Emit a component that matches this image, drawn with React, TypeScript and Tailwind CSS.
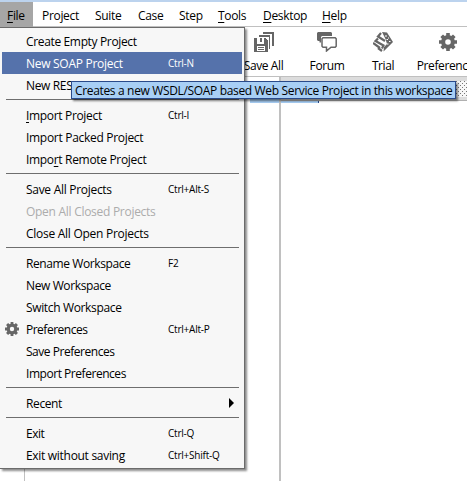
import React from "react";

type Row = { t: React.ReactNode; k?: string; sel?: boolean; off?: boolean; gear?: boolean; arrow?: boolean; tr: string };
const u = (s: string) => <span className="underline underline-offset-2">{s}</span>;

const groups: Row[][] = [
  [
    { t: "Create Empty Project", tr: "tracking-[-0.35px]" },
    { t: "New SOAP Project", k: "Ctrl-N", sel: true, tr: "tracking-[-0.28px]" },
    { t: "New REST Project", tr: "tracking-[-0.35px]" },
  ],
  [
    { t: <>{u("I")}mport Project</>, k: "Ctrl-I", tr: "tracking-[-0.33px]" },
    { t: "Import Packed Project", tr: "tracking-[-0.3px]" },
    { t: <>Impo{u("r")}t Remote Project</>, tr: "tracking-[-0.32px]" },
  ],
  [
    { t: "Save All Projects", k: "Ctrl+Alt-S", tr: "tracking-[-0.29px]" },
    { t: "Open All Closed Projects", off: true, tr: "tracking-[-0.28px]" },
    { t: "Close All Open Projects", tr: "tracking-[-0.27px]" },
  ],
  [
    { t: "Rename Workspace", k: "F2", tr: "tracking-[-0.41px]" },
    { t: "New Workspace", tr: "tracking-[-0.38px]" },
    { t: "Switch Workspace", tr: "tracking-[-0.35px]" },
    { t: "Preferences", k: "Ctrl+Alt-P", gear: true, tr: "tracking-[-0.5px]" },
    { t: "Save Preferences", tr: "tracking-[-0.47px]" },
    { t: "Import Preferences", tr: "tracking-[-0.46px]" },
  ],
  [{ t: "Recent", arrow: true, tr: "tracking-[-0.38px]" }],
  [
    { t: "Exit", k: "Ctrl-Q", tr: "tracking-[-0.5px]" },
    { t: "Exit without saving", k: "Ctrl+Shift-Q", tr: "tracking-[-0.3px]" },
  ],
];

function Gear({ className }: { className: string }) {
  return (
    <svg viewBox="0 0 18 18" className={className} fill="#666" fillRule="evenodd">
      <path d="M7.2 0h3.6v2.3l1.5.6L14 1.4 16.6 4l-1.5 1.7.6 1.5H18v3.6h-2.3l-.6 1.5 1.5 1.7-2.6 2.6-1.7-1.5-1.500.6V18H7.2v-2.3l-1.5-.6L4 16.6 1.4 14l1.5-1.700-.6-1.5H0V7.2h2.3l.6-1.5L1.4 4 4 1.4l1.7 1.5 1.5-.6zM9 6.2a2.8 2.8 0 1 0 0 5.6 2.8 2.8 0 0 0 0-5.6z" />
    </svg>
  );
}

function SaveAll() {
  return (
    <svg viewBox="0 0 20 20" className="h-5 w-5" fill="#666" fillRule="evenodd" shapeRendering="crispEdges">
      <path d="M9 0h11v14h-2V2H9z" />
      <path d="M5 3h11v14h-1V5H5z" />
      <path d="M0 6h3v6h7V6h1l3 3v11H0zM3 14v5h8v-5z" />
      <path d="M6 6h2v4H6zM4 15h6v1H4zM4 17h6v1H4z" />
    </svg>
  );
}

function Forum() {
  return (
    <svg viewBox="0 0 20 20" className="h-5 w-5">
      <path d="M1 0h13l1 1v3H5L4 5v5.500H2.500V9H1L0 8V1z" fill="#666" />
      <path d="M6 5.8h12.200l1 1v7.400l-1 1H14L9.500 19v-3.800H6l-1-1V6.800z" fill="#fff" stroke="#666" strokeWidth="1.500" />
    </svg>
  );
}

function Trial() {
  return (
    <svg viewBox="0 0 20 20" className="h-5 w-5" fill="none" stroke="#666">
      <path d="M8 1 5 4.500l7 4.500M5 6.500 2.500 9l8 4.500-1.500 3M0 11l7 5M5 16l4 3" strokeWidth="2.200" />
      <path d="M9 0l5 .5 6 9.500-9.500 9.500L11 15l3-3-1.500-5z" fill="#666" stroke="none" />
      <path d="M12 4h2M15 6h1M13.500 7.500h1.500M16 9.500h1.500M14 12h1.500" stroke="#fff" />
    </svg>
  );
}

function Tool({ label, icon, className }: { label: string; icon: React.ReactNode; className: string }) {
  return (
    <div className={`flex shrink-0 flex-col items-center whitespace-nowrap ${className}`}>
      <div className="flex h-5 items-center justify-center">{icon}</div>
      <div className="mt-[5px] text-[12px] font-medium leading-[18px] tracking-[-0.4px]">{label}</div>
    </div>
  );
}

export default function App() {
  return (
    <div className="relative flex h-[481px] w-[467px] flex-col overflow-hidden bg-white font-['Open_Sans','Noto_Sans',sans-serif] text-[12px] text-black">
      <div className="h-[2px] shrink-0 bg-[#bcd3ee]" />
      <nav className="flex h-[25px] shrink-0 border-b border-[#c0c0c0] leading-[27px] tracking-[-0.32px]">
        <div className="h-[25px] w-[33px] bg-[#a6a6a6] pl-[7px]">{u("F")}ile</div>
        <div className="w-[53px] pl-[9px]">Project</div>
        <div className="w-[43px] pl-[9px]">Suite</div>
        <div className="w-[41px] pl-[9px]">Case</div>
        <div className="w-[39px] pl-[9px]">Step</div>
        <div className="w-[45px] pl-[9px]">{u("T")}ools</div>
        <div className="w-[59px] pl-[9px]">{u("D")}esktop</div>
        <div className="pl-[9px]">{u("H")}elp</div>
      </nav>
      <div className="flex h-[50px] shrink-0 border-b border-[#c0c0c0] pl-[233px] pt-[5px]">
        <Tool label="Save All" icon={<SaveAll />} className="w-[61px]" />
        <Tool label="Forum" icon={<Forum />} className="w-[66px]" />
        <Tool label="Trial" icon={<Trial />} className="w-[46px]" />
        <Tool label="Preferences" icon={<Gear className="h-[18px] w-[18px]" />} className="ml-[10px] w-[64px]" />
      </div>
      <main className="flex min-h-0 flex-1">
        <aside className="flex w-[279px] flex-col">
          <div className="ml-[250px] mt-[20px] h-[6px] bg-[#a8cff5]" />
          <div className="ml-6 flex-1 border-l border-[#c0c0c0]" />
        </aside>
        <div className="w-[2px] bg-[#c0c0c0]" />
        <section className="flex-1">
          <div className="h-[24px] border-b border-[#b0b0b0] bg-[#dcdcdc] pt-[4px]">
            <svg className="ml-[174px] block h-[16px] w-[12px]">
              <pattern id="grip" width="4" height="4" patternUnits="userSpaceOnUse">
                <rect width="4" height="4" fill="#f7f7f7" />
                <rect x="1" y="0" width="1" height="1" fill="#777" />
                <rect x="3" y="2" width="1" height="1" fill="#777" />
              </pattern>
              <rect width="12" height="16" fill="url(#grip)" />
            </svg>
          </div>
          <div className="h-[2px] w-[38px] border-r border-[#294a8a] bg-[#a8cff5]" />
        </section>
      </main>

      <div className="absolute left-0 top-[27px] h-[442px] w-[245px] border-b border-r border-t border-[#6b6b6b] bg-[#f7f7f7] pt-[2px] shadow-[2px_2px_2px_rgba(0,0,0,0.45)]">
        {groups.map((g, i) => (
          <React.Fragment key={i}>
            {i > 0 && (
              <div className="ml-[6px] mr-[5px] h-[8px] pt-[3px]">
                <div className="h-px bg-[#6e6e6e]" />
              </div>
            )}
            {g.map((r, j) => (
              <div
                key={j}
                className={`mx-[2px] flex h-[22px] items-center whitespace-nowrap ${r.sel ? "bg-[#5572ab] text-white" : r.off ? "text-[#acacac]" : ""}`}
              >
                <div className="w-[24px] pl-[3px]">{r.gear && <Gear className="h-[14px] w-[14px]" />}</div>
                <div className={`w-[142px] pt-[2px] ${r.tr}`}>{r.t}</div>
                <div className="flex-1 pt-px text-[10px] tracking-[-0.22px]">{r.k}</div>
                {r.arrow && (
                  <svg viewBox="0 0 5 10" className="mr-[8px] h-[10px] w-[5px]">
                    <path d="M0 0l5 5-5 5z" />
                  </svg>
                )}
              </div>
            ))}
          </React.Fragment>
        ))}
      </div>

      <div className="absolute left-[71px] top-[81px] h-[18px] w-[385px] whitespace-nowrap border border-[#294a8a] bg-[#a8cff5] pl-[3px] leading-[18px] tracking-[-0.34px] shadow-[2px_2px_2px_rgba(0,0,0,0.5)]">
        Creates a new WSDL/SOAP based Web Service Project in this workspace
      </div>
    </div>
  );
}
